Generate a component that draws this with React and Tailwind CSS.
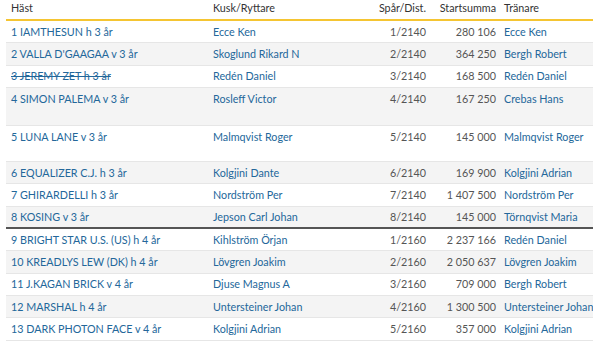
const rows = [
  { horse: "1 IAMTHESUN h 3 år", driver: "Ecce Ken", track: "1/2140", sum: "280 106", trainer: "Ecce Ken" },
  { horse: "2 VALLA D'GAAGAA v 3 år", driver: "Skoglund Rikard N", track: "2/2140", sum: "364 250", trainer: "Bergh Robert" },
  { horse: "3 JEREMY ZET h 3 år", driver: "Redén Daniel", track: "3/2140", sum: "168 500", trainer: "Redén Daniel", scratched: true },
  { horse: "4 SIMON PALEMA v 3 år", driver: "Rosleff Victor", track: "4/2140", sum: "167 250", trainer: "Crebas Hans", tall: "h-[38px]" },
  { horse: "5 LUNA LANE v 3 år", driver: "Malmqvist Roger", track: "5/2140", sum: "145 000", trainer: "Malmqvist Roger", tall: "h-[36px]" },
  { horse: "6 EQUALIZER C.J. h 3 år", driver: "Kolgjini Dante", track: "6/2140", sum: "169 900", trainer: "Kolgjini Adrian" },
  { horse: "7 GHIRARDELLI h 3 år", driver: "Nordström Per", track: "7/2140", sum: "1 407 500", trainer: "Nordström Per" },
  { horse: "8 KOSING v 3 år", driver: "Jepson Carl Johan", track: "8/2140", sum: "145 000", trainer: "Törnqvist Maria", split: true },
  { horse: "9 BRIGHT STAR U.S. (US) h 4 år", driver: "Kihlström Örjan", track: "1/2160", sum: "2 237 166", trainer: "Redén Daniel" },
  { horse: "10 KREADLYS LEW (DK) h 4 år", driver: "Lövgren Joakim", track: "2/2160", sum: "2 050 637", trainer: "Lövgren Joakim" },
  { horse: "11 J.KAGAN BRICK v 4 år", driver: "Djuse Magnus A", track: "3/2160", sum: "709 000", trainer: "Bergh Robert" },
  { horse: "12 MARSHAL h 4 år", driver: "Untersteiner Johan", track: "4/2160", sum: "1 300 500", trainer: "Untersteiner Johan" },
  { horse: "13 DARK PHOTON FACE v 4 år", driver: "Kolgjini Adrian", track: "5/2160", sum: "357 000", trainer: "Kolgjini Adrian" },
];

const StartList = () => {
  return (
    <div className="w-[593px] h-[341px] overflow-hidden bg-white pl-[6px] text-[10.75px] whitespace-nowrap" style={{ fontFamily: 'Lato, sans-serif' }}>
      <div className="flex items-center h-[21px] pb-[2px] border-b-2 border-[#f5c532] text-[#333]">
        <div className="w-[202px] shrink-0 pl-[5px]">Häst</div>
        <div className="w-[150px] shrink-0 pl-[5px]">Kusk/Ryttare</div>
        <div className="w-[73px] shrink-0 pr-[5px] text-right">Spår/Dist.</div>
        <div className="w-[68px] shrink-0 pr-[3px] text-right">Startsumma</div>
        <div className="flex-1 min-w-0 pl-[5px]">Tränare</div>
      </div>
      {rows.map((row, i) => (
        <div
          key={i}
          className={`flex items-start ${row.tall || "h-[22.33px]"} ${i % 2 === 1 ? "bg-[#f4f4f4]" : "bg-white"} ${row.split ? "border-b-2 border-[#555]" : "border-b border-[#e6e6e6]"}`}
        >
          <div className="flex items-center shrink-0 h-[21.33px] w-[202px] pl-[5px] text-[#23679a]">
            <span className={row.scratched ? "line-through" : ""}>{row.horse}</span>
          </div>
          <div className="flex items-center shrink-0 h-[21.33px] w-[150px] pl-[5px] text-[#23679a]">{row.driver}</div>
          <div className="flex items-center shrink-0 justify-end h-[21.33px] w-[73px] pr-[5px] text-[#555]">{row.track}</div>
          <div className="flex items-center shrink-0 justify-end h-[21.33px] w-[68px] pr-[3px] text-[#555]">{row.sum}</div>
          <div className="flex items-center min-w-0 h-[21.33px] flex-1 pl-[5px] text-[#23679a]">{row.trainer}</div>
        </div>
      ))}
    </div>
  );
};

export default function App() {
  return <StartList />;
}
